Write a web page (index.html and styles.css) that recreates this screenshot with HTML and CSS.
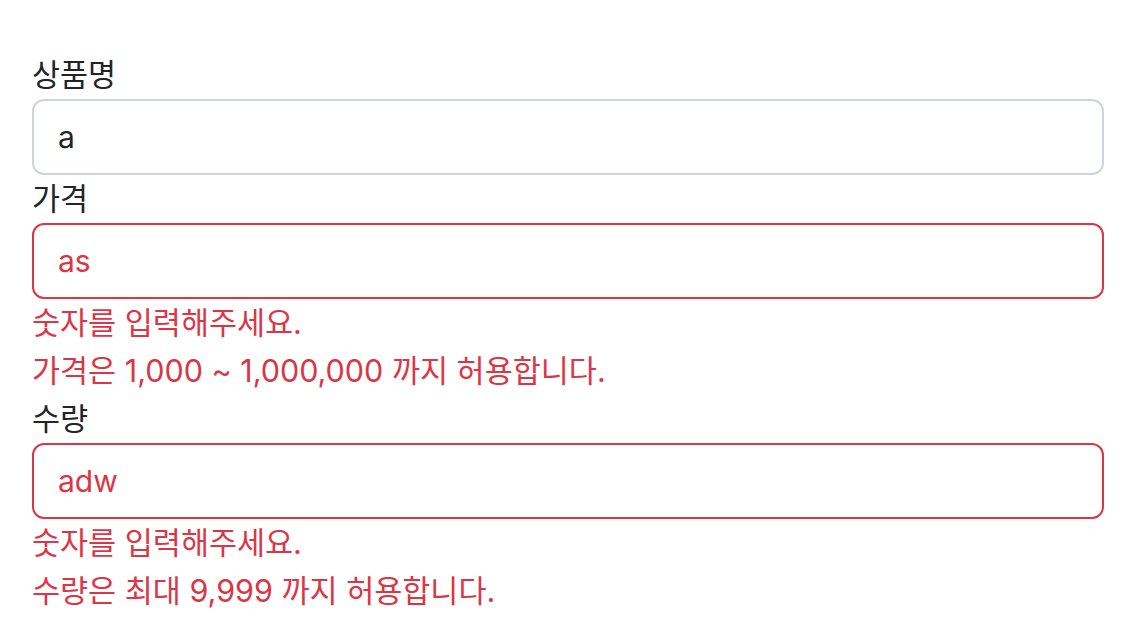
FILE: index.html
```html
<!DOCTYPE html>
<html lang="ko">
  <head>
    <meta charset="UTF-8" />
    <meta name="viewport" content="width=device-width, initial-scale=1.0" />
    <title>상품 등록</title>
    <link rel="stylesheet" href="styles.css">
  </head>
  <body>
    <form class="item-form">
      <div class="field">
        <label class="field-label" for="itemName">상품명</label>
        <input type="text" id="itemName" class="form-control" value="a">
      </div>
      <div class="field">
        <label class="field-label" for="price">가격</label>
        <input type="text" id="price" class="form-control field-error" value="as">
        <div class="field-error">숫자를 입력해주세요.</div>
        <div class="field-error">가격은 1,000 ~ 1,000,000 까지 허용합니다.</div>
      </div>
      <div class="field">
        <label class="field-label" for="quantity">수량</label>
        <input type="text" id="quantity" class="form-control field-error" value="adw">
        <div class="field-error">숫자를 입력해주세요.</div>
        <div class="field-error">수량은 최대 9,999 까지 허용합니다.</div>
      </div>
    </form>
  </body>
</html>
```

FILE: styles.css
```css
* {
  margin: 0;
  padding: 0;
  box-sizing: border-box;
}

body {
  width: 1142px;
  height: 636px;
  background-color: #fff;
  color: #212529;
  font-family: Inter, "Noto Sans CJK KR", sans-serif;
  font-size: 30.5px;
  line-height: 48px;
}

.item-form {
  padding: 51px 38px 0 32px;
}

.field-label {
  display: block;
  height: 48px;
}

.form-control {
  display: block;
  width: 100%;
  height: 76px;
  padding: 0 24px;
  font-family: Inter, "Noto Sans CJK KR", sans-serif;
  font-size: 30px;
  color: #212529;
  background-color: #fff;
  border: 2px solid #ced4da;
  border-radius: 12px;
  outline: none;
}

.form-control.field-error {
  border-color: #dc3545;
  color: #dc3545;
}

.field-error {
  color: #dc3545;
}
```
